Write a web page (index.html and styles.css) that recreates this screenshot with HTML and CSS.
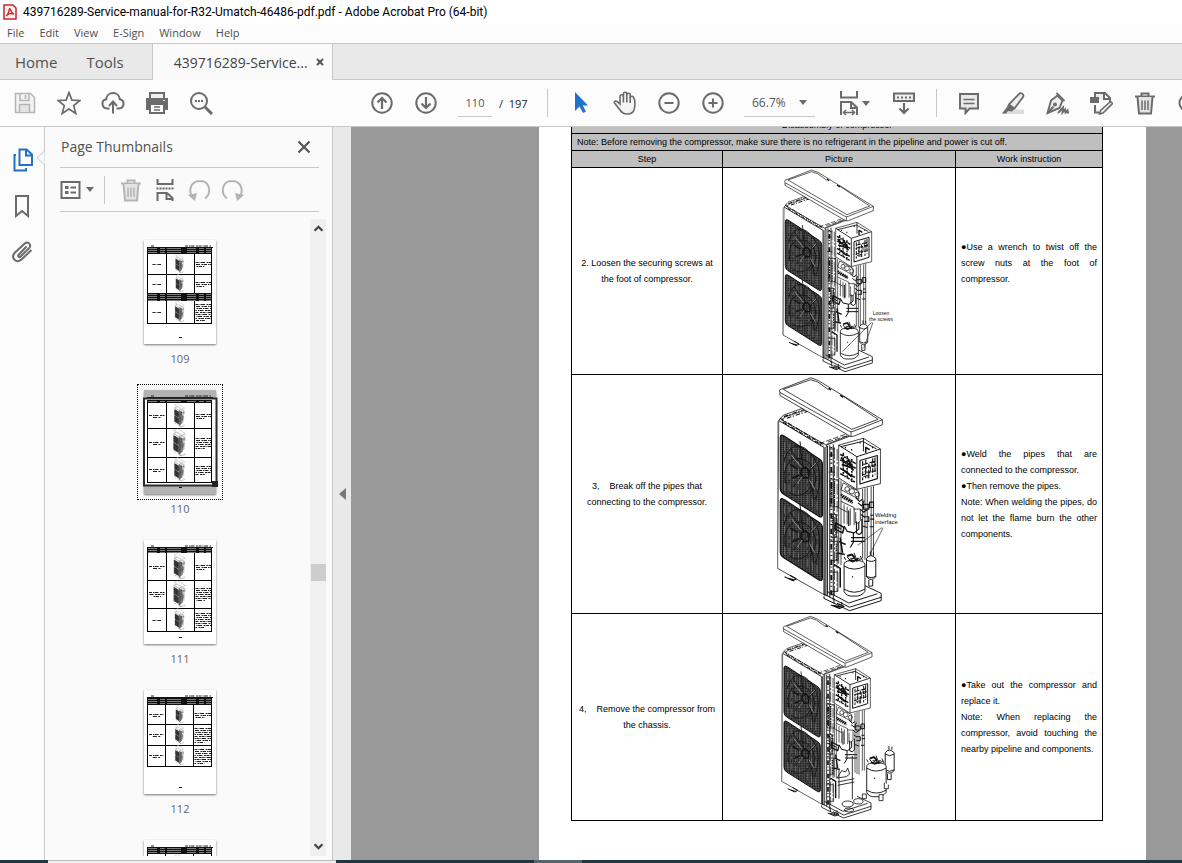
FILE: index.html
```html
<!DOCTYPE html>
<html lang="en">
<head>
<meta charset="utf-8">
<title>439716289-Service-manual-for-R32-Umatch-46486-pdf.pdf - Adobe Acrobat Pro (64-bit)</title>
<link rel="stylesheet" href="styles.css">
</head>
<body>
<svg class="defs" aria-hidden="true">
  <defs>
    <pattern id="mesh" width="7" height="5" patternUnits="userSpaceOnUse">
      <rect width="7" height="5" fill="#585858"/>
      <path d="M1 0v5M4 0v3" stroke="#111" stroke-width="2.4"/>
      <path d="M0 4.5h3" stroke="#8a8a8a"/>
    </pattern>
    <g id="fan" stroke="#111" fill="none">
      <path d="M54 164q-5-1-5 6v132q0 10 8 15l92 58q9 5 9-5V240q0-9-8-14L60 167z" fill="url(#mesh)" stroke-width="3"/>
      <path d="M60 182v130M72 186v138M84 192v140M96 200v138M120 214v138M132 222v138M144 230v136" stroke="#8c8c8c" stroke-width="1.500" stroke-dasharray="22 9 8 14"/>
      <path d="M60 230c8-40 40-50 66-20s34 70 14 120M64 290c-10-40 6-70 40-64s50 60 20 90M70 310c20 20 50 10 60-20M74 200c10 10 20 30 38 50M112 268l-30 30M118 262l30-30M100 180c4 30 2 50 10 70M120 274c6 20 14 30 16 60" stroke-width="2.500"/>
      <path d="M104 252l12-4 8 10-2 16-12 2-8-10zM74 240l20 12M80 276l18-8" stroke-width="4"/>
      <path d="M78 216l24 30M92 290l14-18M128 250l14-14M124 280l14 24" stroke="#aaa" stroke-width="2"/>
    </g>
    <g id="unit" stroke="#111" fill="none" stroke-width="2" stroke-linejoin="round">
      <!-- cabinet -->
      <path d="M45 126l12-14 62-22 120 70-70 28-4 392L42 510z" fill="#fff"/>
      <path d="M45 126l117 70v382" stroke-width="2.5"/>
      <path d="M52 124l12-8 58-20 114 68-68 26z"/>
      <path d="M58 116l62-22M66 120l54-18M48 120l112 68M56 130l104 62" stroke-dasharray="12 4 3 5" stroke-width="3"/>
      <path d="M42 128v382" stroke="#888"/>
      <path d="M108 88h18M150 186l22-8 62-22M172 182l66-22" stroke-dasharray="14 5"/>
      <use href="#fan"/>
      <use href="#fan" y="165"/>
      <path d="M60 532l22 10 8-5-16-9M70 536l14 4M180 605l22 9 12-5-18-8M186 606l18 4" stroke-width="3"/>
      <!-- lid -->
      <path d="M48 46q-3 3 0 7v8l180 105q5 3 10 1l75-30v-13L147 22 128 15z" fill="#fff"/>
      <path d="M48 53l178 100q6 4 12 1l75-30M57 45l71-25 18 6 28 20M210 62l92 61-68 26L57 45M232 156v12" />
      <path d="M174 42l6 5M204 60l8 6" stroke-width="4"/>
      <!-- frame posts -->
      <path d="M165 195v385M171 192v390M177 190v395M186 188v405" stroke-width="2.5"/>
      <path d="M168 195v387" stroke="#999" stroke-width="4"/>
      <path d="M181 195v385" stroke-width="5" stroke-dasharray="3 9 14 5 2 7"/>
      <path d="M189 196v384M196 200v370" stroke-dasharray="30 4 6 5"/>
      <path d="M176 200h14M176 216h12M174 260h16M178 280h22v70h-22zM176 370h18v60h-14M178 440h20v50h-18M176 520h22v50h-20"/>
      <path d="M182 286v60M189 284v64M193 370v60M185 374v50M194 446v42" stroke-width="4" stroke-dasharray="3 2"/>
      <!-- control box -->
      <path d="M200 190l64-18 44 28v90l-62 15-46-30z" fill="#fff"/>
      <path d="M200 190l47 30 61-20M247 220v84M264 172v34M206 194l56-14 36 20" stroke-width="2.5"/>
      <path d="M255 230l45-13v60l-45 14z" stroke-width="3"/>
      <path d="M204 214l40 24M204 228l40 22M204 250l38 24M204 264l38 22M212 210v60M222 218v58M234 226v60" stroke-width="4" stroke-dasharray="9 3 5 2"/>
      <path d="M206 222l12 14 8-6 10 18M208 240l24 8M214 256l20 16M226 236l12 20" stroke-width="5"/>
      <path d="M262 232v50M270 228v48M278 238v40M288 224v50M294 222v44M260 250l38-10M260 268l36-12M264 240l30-8" stroke-width="3" stroke-dasharray="12 4 7 3"/>
      <path d="M272 246h10v14h-14zM286 234h8v12h-8zM264 272l12-4v8" stroke-width="2.5"/>
      <path d="M216 196h3M232 202h3M254 184h3M286 196h3M270 210v-14l10 6" stroke-width="4"/>
      <!-- valves and pipework -->
      <path d="M200 276v222M206 282v220M268 302v186M262 304v180M274 300v190M284 298v180M290 296v182" stroke-width="2"/>
      <path d="M212 288l40 22v20l-46-24zM206 336l34 16v46M214 344v50M222 350v46M230 354v44M238 356h18v30q-4 10-12 6v-28M196 350l26 14"/>
      <path d="M206 318l30 18M208 324l28 16" stroke-width="6" stroke-dasharray="4 2"/>
      <circle cx="222" cy="304" r="6"/><circle cx="234" cy="310" r="7"/><circle cx="248" cy="318" r="6"/>
      <path d="M244 326l10 10 8-6M250 340l10 8 6-14M256 356l8 8 10-6M214 400l8 14 18 4 12-10v-18M238 418v24l-8 14M206 408l-14-8M232 430h36M232 440h36M246 388v30q8 8 14-2v-34M226 360v40" stroke-width="3"/>
      <path d="M264 344h14v12h-14zM280 338h10v14h-10zM266 376h12v12h-12M282 372h8M282 382h10M280 402h10M258 370l10 8M262 400l12 4" stroke-width="3"/>
      <path d="M192 392l22 12-4 14-20-10zM200 440l18 8M196 470l20 4M204 430l6 40M188 500l16 10v50" stroke-width="4"/>
      <!-- base tray -->
      <path d="M162 577l66 34 82-26v-10l-42-20M162 582v6l66 32 82-26v-10M170 570l56 30 74-24M188 588v14M208 597v12" stroke-width="2.5"/>
    </g>
    <g id="compressor" stroke="#111" stroke-width="2.5">
      <path d="M214 500q0-8 14-10h24q16 2 16 10v70q-10 14-28 12-20 2-26-12z" fill="#fff"/>
      <path d="M214 504q26 16 54 0M214 564q26 16 54 0M222 480l8 10 10-8 6 10 14-8M218 488l-4-8M240 470l4 12M256 478l6 12M236 530v4M230 484h24" fill="none"/>
      <path d="M226 488l10 4 14-6M222 478l12-4 8 8" fill="none" stroke-width="5"/>
    </g>
    <g id="accumulator" stroke="#111" stroke-width="2.5">
      <path d="M272 484q10-14 24 0v48q-12 14-24 0z" fill="#fff"/>
      <path d="M272 488q12 8 24 0M272 530q12 8 24 0M282 476v-10M290 476v-8M278 540v16h10v-16" fill="none"/>
    </g>
    <symbol id="trash" viewBox="0 0 24 24">
      <path d="M2 5.500h20M8.500 5V2.500h7V5" fill="none" stroke="currentColor" stroke-width="2"/>
      <path d="M4.500 6l1.500 16.500h12L19.500 6" fill="#e4e4e4" stroke="currentColor" stroke-width="2"/>
      <path d="M9 9.500v9.500M12 9.500v9.500M15 9.500v9.500" stroke="currentColor" stroke-width="1.500"/>
    </symbol>
    <symbol id="caret" viewBox="0 0 8 5"><path d="M0 0h8L4 5z" fill="currentColor"/></symbol>
  </defs>
</svg>

<div class="app">
  <header class="titlebar">
    <svg class="logo" viewBox="0 0 14 16"><path d="M1 1h9l3 3v11H1z" fill="#fff3f1" stroke="#c4292c" stroke-width="1.500"/><path d="M7 4.500c-1.500 0 .2 4-3.500 7.500M7 4.500c.8 2 1 4.500 4 5.500M3.500 12c.5-2 4-3 7.500-2" fill="none" stroke="#d7282c" stroke-width="1.500"/></svg>
    <span>439716289-Service-manual-for-R32-Umatch-46486-pdf.pdf - Adobe Acrobat Pro (64-bit)</span>
  </header>
  <nav class="menubar">
    <button>File</button><button>Edit</button><button>View</button><button>E-Sign</button><button>Window</button><button>Help</button>
  </nav>
  <div class="tabs">
    <button class="tab home">Home</button><button class="tab tools">Tools</button>
    <div class="tab-doc"><span>439716289-Service...</span><button class="tab-close" aria-label="Close tab"><svg viewBox="0 0 8 8"><path d="M1 1l6 6M7 1L1 7" stroke="#555" stroke-width="2"/></svg></button></div>
  </div>

  <div class="toolbar">
    <div class="group">
      <button class="tool muted" aria-label="Save"><svg viewBox="0 0 24 24"><path d="M2.500 2.500h15l4 4v15h-19z" fill="#f3f3f3" stroke="currentColor" stroke-width="1.500"/><path d="M7 3v6.500h9V3M12.500 4v4" fill="none" stroke="currentColor" stroke-width="1.500"/><path d="M6.500 21v-7.500h10V21" fill="#e4e4e4" stroke="currentColor" stroke-width="1.500"/></svg></button>
      <button class="tool" aria-label="Star"><svg viewBox="0 0 24 24"><path d="M12 1.500l2.900 7.600 8.100.4-6.300 5.100 2.100 7.900L12 18l-6.800 4.500 2.100-7.900L1 9.500l8.100-.4z" fill="none" stroke="currentColor" stroke-width="1.700"/></svg></button>
      <button class="tool" aria-label="Upload"><svg viewBox="0 0 24 24"><path d="M8.500 17.500H6a4.700 4.700 0 0 1-.8-9.300C5.500 4.500 8.500 2 12 2s6.500 2.500 6.800 6.200a4.700 4.700 0 0 1-.8 9.300h-2.500" fill="none" stroke="currentColor" stroke-width="2"/><path d="M12 22.500V11M8 15l4-4.500 4 4.500" fill="none" stroke="currentColor" stroke-width="2"/></svg></button>
      <button class="tool" aria-label="Print"><svg viewBox="0 0 24 24"><path d="M5 8V2h14v6" fill="#eee" stroke="currentColor" stroke-width="2"/><path d="M1 7h22v12H1z" fill="currentColor"/><path d="M5 13h14v9H5z" fill="#fff" stroke="currentColor" stroke-width="2"/><path d="M9 16h6M9 19h6" stroke="currentColor" stroke-width="1.500"/><path d="M18 9.500h2" stroke="#ddd"/></svg></button>
      <button class="tool" aria-label="Find"><svg viewBox="0 0 24 24"><circle cx="10" cy="10" r="8" fill="none" stroke="currentColor" stroke-width="2"/><path d="M16 16l7 7" stroke="currentColor" stroke-width="3"/><path d="M6 10h2M9 10h2M12 10h2" stroke="currentColor" stroke-width="2"/></svg></button>
    </div>
    <div class="group pager">
      <button class="tool" aria-label="Previous page"><svg viewBox="0 0 24 24"><circle cx="12" cy="12" r="9.700" fill="none" stroke="currentColor" stroke-width="2"/><path d="M12 18V7M7.500 11.500L12 7l4.500 4.500" fill="none" stroke="currentColor" stroke-width="2.200"/></svg></button>
      <button class="tool" aria-label="Next page"><svg viewBox="0 0 24 24"><circle cx="12" cy="12" r="9.700" fill="none" stroke="currentColor" stroke-width="2"/><path d="M12 6v11M7.500 12.500L12 17l4.500-4.500" fill="none" stroke="currentColor" stroke-width="2.200"/></svg></button>
      <label class="page-field"><input type="text" value="110" aria-label="Page number"></label>
      <span class="total">/&nbsp; 197</span>
    </div>
    <i class="sep"></i>
    <div class="group view">
      <button class="tool" aria-label="Select"><svg viewBox="0 0 24 24"><path d="M6 1v19l4.500-4.500 3.500 6.500 3-1.500-3.200-6H19z" fill="#2271c8"/></svg></button>
      <button class="tool" aria-label="Hand"><svg viewBox="0 0 24 24"><path d="M7 13V5.500a1.700 1.700 0 0 1 3.400 0V3a1.700 1.700 0 0 1 3.400 0v1a1.700 1.700 0 0 1 3.400 0v3a1.700 1.700 0 0 1 3.500 0C22 8 22.500 15 21 19c-1 3-4 4-7 4s-5-1-7-4l-5.500-7c-.8-1.500 1-2.500 2.500-1.500z" fill="#f4f4f4" stroke="currentColor" stroke-width="1.600"/><path d="M10.400 5v6.500M13.800 4v7.500M17.200 6v6" stroke="currentColor" stroke-width="1.600"/></svg></button>
      <button class="tool" aria-label="Zoom out"><svg viewBox="0 0 24 24"><circle cx="12" cy="12" r="9.700" fill="none" stroke="currentColor" stroke-width="2"/><path d="M7.500 12h9" stroke="currentColor" stroke-width="2"/></svg></button>
      <button class="tool" aria-label="Zoom in"><svg viewBox="0 0 24 24"><circle cx="12" cy="12" r="9.700" fill="none" stroke="currentColor" stroke-width="2"/><path d="M7.500 12h9M12 7.500v9" stroke="currentColor" stroke-width="2"/></svg></button>
    </div>
    <label class="zoom"><select aria-label="Zoom level"><option>66.7%</option></select><svg class="caret"><use href="#caret"/></svg></label>
    <button class="tool fit" aria-label="Fit width"><svg viewBox="0 0 24 26"><path d="M4 1v6.500h16V1M4 25V12h10l6 5.500V25M14 12v6h6" fill="none" stroke="currentColor" stroke-width="2"/><path d="M7 22.500h10M9 20l-2.500 2.500L9 25M15 20l2.500 2.500L15 25" fill="none" stroke="currentColor" stroke-width="1.500"/></svg><svg class="caret"><use href="#caret"/></svg></button>
    <button class="tool scroll" aria-label="Scroll mode"><svg viewBox="0 0 24 24"><path d="M2 2.500h20v7.500H2z" fill="#eee" stroke="currentColor" stroke-width="2"/><path d="M5 6.500h14" stroke="currentColor" stroke-width="2" stroke-dasharray="2"/><path d="M12 12v9.500M7.500 17.500L12 22l4.500-4.500" fill="none" stroke="currentColor" stroke-width="2.200"/></svg></button>
    <i class="sep"></i>
    <div class="group marks">
      <button class="tool" aria-label="Comment"><svg viewBox="0 0 24 24"><path d="M3 3h18v14.500H12.500L8.500 22v-4.500H3z" fill="#e9e9e9" stroke="currentColor" stroke-width="2"/><path d="M6.500 8.500h11M6.500 12.500h11" stroke="currentColor" stroke-width="1.500"/></svg></button>
      <button class="tool" aria-label="Highlight"><svg viewBox="0 0 24 24"><path d="M7 18.500h16V23H2z" fill="#ddd"/><path d="M18 3c2-2 5.500 0 4 3L13.500 17.500 8 13.500z" fill="#ececec" stroke="currentColor" stroke-width="1.800"/><path d="M7.500 13l6 5-2.500 2.500-4-.5-2 2.500H1l4.500-6z" fill="currentColor"/></svg></button>
      <button class="tool" aria-label="Sign"><svg viewBox="0 0 24 24"><path d="M12.500 4.500l5 5-3 7.500L2.500 22 6 9.500z" fill="#eee" stroke="currentColor" stroke-width="1.900"/><path d="M11.500 2l8 8M2.500 22l6-6.500" stroke="currentColor" stroke-width="1.900"/><circle cx="10" cy="13.500" r="2" fill="currentColor"/><path d="M13 22l5-5.500-.5 5 2.500-3 .5 3 2-2v2H24" fill="none" stroke="currentColor" stroke-width="1.900"/></svg></button>
      <button class="tool" aria-label="Edit pages"><svg viewBox="0 0 24 24"><path d="M6 6V2h10l5 5v4M6 14v7.500h4M15 2v6h6" fill="#eee" stroke="currentColor" stroke-width="2"/><path d="M1 6h9v6H1z" fill="currentColor"/><path d="M21.500 10.500l2 2L14 22l-3.500 1 1-3.500z" fill="#eee" stroke="currentColor" stroke-width="1.600"/></svg></button>
      <button class="tool" aria-label="Delete"><svg><use href="#trash"/></svg></button>
      <button class="tool" aria-label="Rotate"><svg viewBox="0 0 24 24"><path d="M12 4H10a7.500 8 0 0 0 0 16H12" fill="none" stroke="currentColor" stroke-width="2"/></svg></button>
    </div>
  </div>

  <main class="workspace">
    <nav class="rail">
      <button aria-label="Page thumbnails"><svg class="blue" viewBox="0 0 22 24"><path d="M8.500 1.500h7l5.500 5V17H8.500z" fill="#fff" stroke="currentColor" stroke-width="2"/><path d="M15 2v5.500h6M5 7H3.500v15.500H15V20" fill="none" stroke="currentColor" stroke-width="2"/></svg></button>
      <button aria-label="Bookmarks"><svg viewBox="0 0 22 24"><path d="M5 2h12v20l-6-5-6 5z" fill="none" stroke="currentColor" stroke-width="2"/></svg></button>
      <button aria-label="Attachments"><svg viewBox="0 0 22 24"><path d="M15.500 6.500l-8 8.500c-1 1.200.7 2.900 1.900 1.700l8.600-8.500c3-3.200-.9-7.600-4.500-4.500L4 12.500c-4.700 5 1 11.500 6.500 7L20.500 10" fill="none" stroke="currentColor" stroke-width="2"/></svg></button>
      <svg class="notch" viewBox="0 0 9 16"><path d="M8.500 0v1L1 8l7.500 7v1" fill="#fafafa" stroke="#c8c8c8"/></svg>
    </nav>
    <aside class="panel">
      <div class="panel-head"><h2>Page Thumbnails</h2><button aria-label="Close panel"><svg viewBox="0 0 14 14"><path d="M1.500 1.500l11 11M12.500 1.500l-11 11" stroke="#555" stroke-width="2.200"/></svg></button></div>
      <div class="panel-tools">
        <button class="options" aria-label="Options"><svg class="list-icon" viewBox="0 0 20 18"><path d="M1 1h18v16H1z" fill="#fff" stroke="currentColor" stroke-width="2"/><path d="M4.500 6.500h3.500M4.500 11.500h3.500" stroke="currentColor" stroke-width="3"/><path d="M10 6.500h5.500M10 11.500h5.500" stroke="currentColor" stroke-width="2"/></svg><svg class="caret"><use href="#caret"/></svg></button>
        <i class="sep"></i>
        <button class="muted" aria-label="Delete page"><svg><use href="#trash"/></svg></button>
        <button aria-label="Split"><svg viewBox="0 0 24 24"><path d="M4.500 1v5h15V1M4.500 23v-8H14l5.500 5v3M13.500 15v6h6" fill="none" stroke="currentColor" stroke-width="2"/><path d="M3.500 10.500h17" stroke="currentColor" stroke-width="2" stroke-dasharray="2 1"/></svg></button>
        <button class="muted" aria-label="Rotate left"><svg viewBox="0 0 24 24"><path d="M6 20C1 14 3 3 13 3c10 0 12 12 5 17.500" fill="none" stroke="currentColor" stroke-width="2"/><path d="M1 17l9-2-2 8z" fill="currentColor"/></svg></button>
        <button class="muted" aria-label="Rotate right"><svg viewBox="0 0 24 24"><path d="M18 20c5-6 3-17-7-17C1 3-1 15 6 20.500" fill="none" stroke="currentColor" stroke-width="2"/><path d="M23 17l-9-2 2 8z" fill="currentColor"/></svg></button>
      </div>
      <div class="panel-body">
        <div class="thumbs" id="thumbs"></div>
        <div class="scrollbar">
          <svg viewBox="0 0 8 6"><path d="M.5 5L4 1.500 7.500 5" fill="none" stroke="#444" stroke-width="2"/></svg>
          <i class="grip"></i>
          <svg viewBox="0 0 8 6"><path d="M.5 1L4 4.500 7.500 1" fill="none" stroke="#444" stroke-width="2"/></svg>
        </div>
      </div>
    </aside>
    <button class="collapse" aria-label="Collapse panel"><svg viewBox="0 0 7 12"><path d="M7 0v12L0 6z" fill="#777"/></svg></button>
    <section class="canvas">
      <article class="sheet">
        <table>
          <colgroup><col class="c-step"><col class="c-pic"><col class="c-work"></colgroup>
          <thead>
            <tr><th colspan="3">Disassembly of compressor</th></tr>
            <tr><th colspan="3" class="note">Note: Before removing the compressor, make sure there is no refrigerant in the pipeline and power is cut off.</th></tr>
            <tr><th>Step</th><th>Picture</th><th>Work instruction</th></tr>
          </thead>
          <tbody>
            <tr>
              <td>2. Loosen the securing screws at the foot of compressor.</td>
              <td class="pic"><svg class="figure" viewBox="0 9 420 618"><use href="#unit"/><use href="#accumulator"/><use href="#compressor"/><path d="M308 472l-88 88M312 472l-28 78" stroke="#222" stroke-width="2"/><text x="336" y="450">Loosen</text><text x="336" y="468">the screws</text></svg></td>
              <td class="work short"><p><span class="dot">●</span>Use a wrench to twist off the screw nuts at the foot of compressor.</p></td>
            </tr>
            <tr>
              <td>3,&nbsp;&nbsp;&nbsp; Break off the pipes that connecting to the compressor.</td>
              <td class="pic"><svg class="figure" viewBox="0 9 420 714"><g transform="translate(-23 0) scale(1.160 1.155)"><use href="#unit"/><use href="#accumulator"/><use href="#compressor"/></g><path d="M340 466l-74 54M342 468l-38 76" stroke="#222" stroke-width="2"/><text class="big" x="350" y="436">Welding</text><text class="big" x="352" y="457">interface</text></svg></td>
              <td class="work"><p><span class="dot">●</span>Weld the pipes that are connected to the compressor.</p><p><span class="dot">●</span>Then remove the pipes.</p><p>Note: When welding the pipes, do not let the flame burn the other components.</p></td>
            </tr>
            <tr>
              <td>4,&nbsp;&nbsp;&nbsp; Remove the compressor from the chassis.</td>
              <td class="pic"><svg class="figure" viewBox="0 6 420 618"><g transform="translate(-4 -2)"><use href="#unit"/></g><g fill="none" stroke="#111" stroke-width="2.500"><ellipse cx="236" cy="576" rx="17" ry="9"/><ellipse cx="268" cy="568" rx="14" ry="8"/><ellipse cx="240" cy="594" rx="14" ry="6"/><path d="M204 498l14-22 12 4 6-12 6 18-10 8zM206 510l50-10M206 520l50-10M250 432v130M210 470v90"/></g><g transform="translate(44 -120) scale(1.120)"><use href="#accumulator"/></g><g transform="translate(62 -86) scale(1.080 1.100)"><use href="#compressor"/></g><path d="M280 546h12v14h-12zM330 548h12v18h-12zM346 512v18h12v-12" fill="#fff" stroke="#111" stroke-width="2.500"/></svg></td>
              <td class="work"><p><span class="dot">●</span>Take out the compressor and replace it.</p><p>Note: When replacing the compressor, avoid touching the nearby pipeline and components.</p></td>
            </tr>
          </tbody>
        </table>
      </article>
    </section>
  </main>
  <footer class="taskbar"><i class="dark start"></i><i class="light"></i><i class="dark mid"></i><i class="active"></i><i class="dark rest"></i></footer>
</div>
<script src="thumbs.js"></script>
</body>
</html>
```

FILE: styles.css
```css
* { box-sizing: border-box; }
html, body { height: 100%; }
body { margin: 0; overflow: hidden; background: #fafafa; color: #505050; font-family: "Open Sans", "Noto Sans", sans-serif; font-size: 11px; }
button { padding: 0; border: 0; background: none; color: inherit; font: inherit; }
svg { display: block; }
.defs { position: absolute; width: 0; height: 0; }
.app { display: flex; flex-direction: column; height: 100vh; }

.titlebar { display: flex; flex: none; align-items: center; gap: 6px; height: 24px; padding: 0 3px; background: #fff; color: #000; font-family: Roboto, "Open Sans", sans-serif; font-size: 12px; white-space: nowrap; }
.logo { width: 14px; height: 16px; }
.menubar { display: flex; flex: none; align-items: center; gap: 15px; height: 20px; padding: 0 7px 2px; border-bottom: 1px solid #c8c8c8; background: #fcfcfc; }

.tabs { display: flex; flex: none; height: 36px; background: #e9e9e9; border-bottom: 1px solid #c8c8c8; }
.tab { font-size: 15px; }
.home { margin-left: 15px; }
.tools { margin: 0 28px 0 29px; }
.tab-doc { display: flex; align-items: center; justify-content: flex-end; gap: 8px; width: 181px; height: 36px; padding-right: 8px; border: solid #c8c8c8; border-width: 0 1px; background: #fafafa; font-size: 14px; color: #444; }
.tab-close svg { width: 8px; height: 8px; }

.toolbar { display: flex; flex: none; align-items: center; height: 47px; padding-left: 3px; overflow: hidden; border-bottom: 1px solid #c8c8c8; background: #fcfcfc; color: #6b6b6b; }
.group { display: flex; flex: none; align-items: center; }
.tool { display: flex; flex: none; align-items: center; justify-content: center; width: 44px; height: 32px; }
.tool svg { width: 24px; height: 24px; }
.muted { color: #b4b4b4; }
.pager { margin-left: 137px; }
.page-field { margin-left: 10px; }
.page-field input { display: block; width: 34px; height: 28px; padding: 0; border: 0; border-bottom: 1px solid #c8c8c8; background: none; color: #555; font: inherit; text-align: center; }
.total { width: 49px; padding-left: 7px; color: #222; }
.sep { flex: none; width: 1px; height: 28px; background: #c8c8c8; }
.pager + .sep { margin-left: 6px; }
.view { margin-left: 11px; }
.zoom { display: flex; flex: none; align-items: center; width: 71px; height: 28px; margin-left: 9px; padding-right: 8px; border-bottom: 1px solid #c8c8c8; }
.zoom select { flex: 1; min-width: 0; padding: 0 0 0 8px; border: 0; appearance: none; background: none; color: #555; font: inherit; font-size: 12px; }
.tool .caret, .caret { width: 8px; height: 5px; }
.fit { gap: 1px; width: 50px; margin-left: 13px; }
.fit svg:first-child { height: 26px; }
.scroll { margin-left: 4px; margin-right: 10px; }
.marks { margin-left: 10px; }

.workspace { display: flex; flex: 1; min-height: 0; }
.rail { position: relative; display: flex; flex: none; flex-direction: column; align-items: center; gap: 22px; width: 45px; padding-top: 21px; border-right: 1px solid #c8c8c8; background: #fcfcfc; color: #6b6b6b; }
.rail button svg { width: 22px; height: 24px; }
.blue { color: #2271c8; }
.notch { position: absolute; top: 23px; right: -1px; width: 9px; height: 16px; }

.panel { display: flex; flex: none; flex-direction: column; width: 288px; border-right: 1px solid #c8c8c8; }
.panel-head { display: flex; flex: none; align-items: center; justify-content: space-between; height: 41px; margin: 0 13px 0 15px; padding-right: 8px; border-bottom: 1px solid #c8c8c8; }
.panel-head h2 { margin: 0; padding: 0 0 2px 1px; font-size: 14px; font-weight: 400; }
.panel-head svg { width: 14px; height: 14px; }
.panel-tools { display: flex; flex: none; align-items: center; gap: 10px; height: 44px; margin: 0 13px 0 15px; border-bottom: 1px solid #c8c8c8; color: #6b6b6b; }
.panel-tools svg { width: 24px; height: 24px; }
.panel-tools .list-icon { width: 21px; height: 18px; }
.panel-tools .caret { width: 8px; height: 5px; }
.panel-tools .muted { color: #b4b4b4; }
.options { display: flex; align-items: center; gap: 5px; }
.panel-tools .sep { margin-right: 4px; }
.panel-body { display: flex; flex: 1; min-height: 0; padding: 7px 6px 4px 5px; }
.thumbs { display: flex; flex: 1; flex-direction: column; align-items: center; gap: 17px; padding-top: 15px; overflow: hidden; }
.thumb { display: flex; flex: none; flex-direction: column; align-items: center; height: 133px; }
.thumb-frame { display: flex; align-items: center; justify-content: center; width: 86px; height: 116px; border: 1px dotted transparent; }
.thumb.current .thumb-frame { border-color: #000; }
.thumb-page { width: 72px; height: 104px; overflow: visible; background: #fff; box-shadow: 0 1px 2px #777; }
.thumb-label { line-height: 17px; color: #666; }
.scrollbar { display: flex; flex: none; flex-direction: column; align-items: center; justify-content: space-between; width: 16px; padding: 6px 0; background: #f0f0f0; }
.scrollbar svg { width: 9px; height: 7px; }
.grip { width: 15px; height: 17px; margin-top: 70px; background: #cdcdcd; }

.collapse { display: flex; flex: none; align-items: center; justify-content: center; width: 18px; background: #e9e9e9; }
.collapse svg { width: 7px; height: 12px; }
.canvas { flex: 1; min-width: 0; padding: 0 36px 0 188px; overflow: hidden; background: #999; }
.sheet { display: flow-root; height: 100%; padding: 0 43px 0 32px; background: #fff; }
.sheet table { width: 100%; margin-top: -11px; border-collapse: collapse; table-layout: fixed; color: #000; font-family: "Liberation Sans", Arial, sans-serif; font-size: 9px; line-height: 16px; }
.c-step { width: 151px; }
.c-work { width: 147px; }
.sheet th, .sheet td { padding: 0 5px; border: 1px solid #000; font-weight: 400; text-align: center; vertical-align: middle; }
.sheet th { height: 17px; background: #bfbfbf; }
.sheet .note { text-align: left; white-space: nowrap; }
.sheet .pic { padding: 0; }
.figure { width: 140px; margin: 0 auto; }
.figure text { fill: #111; font-size: 15px; text-anchor: middle; }
.figure text.big { font-size: 18px; }
.sheet .work { text-align: justify; }
.sheet .short { padding-bottom: 16px; }
.work p { margin: 0; }
.dot { display: inline-block; }

.taskbar { display: flex; flex: none; height: 3px; }
.dark { background: #203640; }
.start { width: 48px; }
.light { width: 288px; border-top: 1px solid #b8b8b8; background: #f0f0f0; }
.mid { width: 198px; }
.active { width: 48px; background: #56656b; }
.rest { flex: 1; }
```

FILE: thumbs.js
```js
const pages = [
  { no: 109, cols: [22.5, 50.5], bands: [[7, 14], [53, 61]], rows: [[14, 34, 1, 3], [34, 53, 1, 3], [61, 83, 1, 9]] },
  { no: 110, current: true, cols: [22.5, 50.5], bands: [[10, 13]], rows: [[13, 38, 2, 3], [38, 67, 2, 6], [67, 92, 2, 5]] },
  { no: 111, cols: [22.5, 50.5], bands: [[7, 13]], rows: [[13, 40, 2, 3], [40, 68, 3, 7], [68, 91, 1, 8]] },
  { no: 112, cols: [21.5, 49.5], bands: [[8, 15]], rows: [[15, 34, 2, 3], [34, 55, 2, 8], [55, 76, 2, 8]] },
  { no: 113, cols: [21.5, 49.5], bands: [[7, 14]], rows: [[14, 40, 2, 5], [40, 70, 2, 6]] }
];

const line = (x1, y, x2, shift = 0) =>
  `<path d="M${x1} ${y}H${x2}" stroke="#222" stroke-width="1" stroke-dasharray="3 1 1 .5 4 1.500 2 .5" stroke-dashoffset="${shift}"/>`;

function textLines(x1, x2, top, bottom, count, centered) {
  const step = 2;
  const first = Math.round((top + bottom) / 2 - (count - 1)) + 0.5;
  let out = "";
  for (let i = 0; i < count; i++) {
    const y = first + i * step;
    const trim = i === count - 1 ? (x2 - x1) * 0.4 : 0;
    out += centered ? line(x1 + trim / 2 + 1, y, x2 - trim / 2 - 1, i * 5) : line(x1, y, x2 - trim, i * 5);
  }
  return out;
}

function miniUnit(top, bottom) {
  const scale = (bottom - top - 1) / 620;
  return `<g transform="translate(${36 - 190 * scale} ${top}) scale(${scale})"><use href="#unit"/>
    <path d="M50 165l108 62v150L50 315zM50 330l108 62v150L50 480zM170 200l75 30v60l20 80-10 150-85 60z" fill="#333" fill-opacity=".6"/></g>`;
}

function draw(page) {
  const [a, b] = page.cols;
  const end = page.rows[page.rows.length - 1][1];
  let s = "";
  if (page.current) s += `<path d="M0 0h72v104H0z" fill="#b2b2b2"/><path d="M0 8h72v88H0z" fill="#fff"/>`;
  s += line(7, 6, 11) + line(41, 6, 67) + `<path d="M3 7.500h66" stroke="#111"/>`;
  for (const [top, bottom, left, right] of page.rows) {
    s += textLines(4, a - 1, top, bottom, left, true);
    s += miniUnit(top, bottom);
    s += textLines(b + 1, 67, top, bottom, right, false);
    s += `<path d="M3 ${bottom}.5H68" stroke="#000"/>`;
  }
  s += `<path d="M3.500 ${page.bands[0][0]}V${end}M${a} ${page.bands[0][1]}V${end}M${b} ${page.bands[0][1]}V${end}M67.500 ${page.bands[0][0]}V${end}" stroke="#000"/>`;
  for (const [top, bottom] of page.bands) {
    s += `<path d="M3 ${top}h65v${bottom - top}H3z" fill="#111"/>`;
    for (let y = top + 1.5; y < bottom; y += 2) s += `<path d="M4 ${y}h63" stroke="#aaa" stroke-width=".7" stroke-dasharray="9 3 5 2 14 6"/>`;
  }
  s += `<path d="M35 97.500h3" stroke="#111"/>`;
  if (page.current) s += `<path d="M0 8.500h72.500v87H0z" fill="none" stroke="#2d2d2d" stroke-width="2"/><path d="M68 91h6v6h-6z" fill="#222"/>`;
  return s;
}

document.getElementById("thumbs").innerHTML = pages.map(page =>
  `<div class="thumb${page.current ? " current" : ""}"><div class="thumb-frame"><svg class="thumb-page" viewBox="0 0 72 104">${draw(page)}</svg></div><span class="thumb-label">${page.no}</span></div>`
).join("");
```
